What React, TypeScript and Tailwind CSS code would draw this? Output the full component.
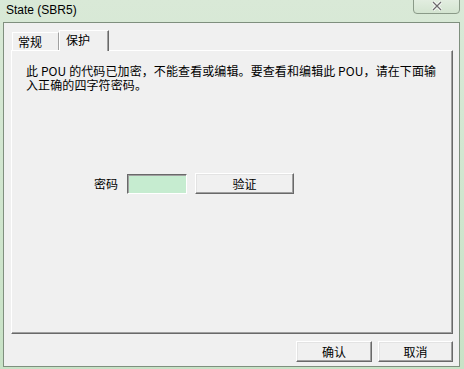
export default function App() {
  const sunkenBtn =
    'flex items-center justify-center bg-[#f0f0f0] border border-t-white border-l-white border-r-[#696969] border-b-[#696969] shadow-[inset_-1px_-1px_0_#a0a0a0,inset_1px_1px_0_#e3e3e3] text-[12px] text-black'

  return (
    <div className="w-[464px] h-[369px] flex flex-col bg-gradient-to-b from-[#d9e9d7] to-[#c8e2c6] font-['Noto_Sans_CJK_SC',sans-serif] overflow-hidden">
      {/* Title bar */}
      <div className="h-[22px] flex items-start relative shrink-0">
        <span className="pl-[6px] pt-[1px] text-[12px] leading-[18px] text-black font-['Liberation_Sans',sans-serif]">
          State (SBR5)
        </span>
        <div className="absolute right-[4px] top-[-2px] w-[47px] h-[16px] rounded-b-[4px] border border-[#8a9a88] bg-gradient-to-b from-[#e3eee1] to-[#d3e4d0] flex items-center justify-center">
          <svg width="12" height="10" viewBox="0 0 12 10">
            <path d="M2 1 L10 9 M10 1 L2 9" stroke="#fff" strokeWidth="3" />
            <path d="M2 1 L10 9 M10 1 L2 9" stroke="#6b6b6b" strokeWidth="1.3" />
          </svg>
        </div>
      </div>

      {/* Client area */}
      <div className="ml-[3px] mr-[4px] mb-[2px] flex-1 flex flex-col bg-[#f0f0f0] border border-[#7f8f7e]">
        {/* Tabs */}
        <div className="h-[27px] flex items-end pl-[8px] shrink-0">
          <div className="h-[18px] w-[47px] border-t border-l border-white border-r border-r-[#a0a0a0] pl-[5px] text-[12px] leading-[17px] text-black">
            常规
          </div>
          <div className="relative z-10 h-[21px] w-[50px] -mb-[1px] bg-[#f0f0f0] border-t border-l border-white border-r border-r-[#696969] shadow-[inset_-1px_0_0_#a0a0a0] pl-[6px] text-[12px] leading-[17px] text-black">
            保护
          </div>
        </div>

        {/* Tab panel */}
        <div className="ml-[7px] mr-[6px] h-[284px] flex flex-col border border-t-white border-l-white border-r-[#696969] border-b-[#696969] shadow-[inset_-1px_-1px_0_#a0a0a0]">
          <p className="mt-[13px] ml-[14px] text-[12px] leading-[14px] text-black tracking-[0.1px]">
            此 POU 的代码已加密，不能查看或编辑。要查看和编辑此 POU，请在下面输
            <br />
            入正确的四字符密码。
          </p>

          <div className="mt-[81px] ml-[82px] flex items-center">
            <span className="text-[12px] leading-[14px] text-black mr-[9px]">密码</span>
            <div className="w-[60px] h-[20px] bg-[#c6ecd0] border border-t-[#696969] border-l-[#696969] border-r-white border-b-white shadow-[inset_1px_1px_0_#a0a0a0]" />
            <div className={`${sunkenBtn} ml-[8px] w-[99px] h-[21px]`}>验证</div>
          </div>
        </div>

        {/* Bottom buttons */}
        <div className="mt-[7px] flex justify-end gap-[6px] pr-[6px]">
          <div className={`${sunkenBtn} w-[76px] h-[21px]`}>确认</div>
          <div className={`${sunkenBtn} w-[75px] h-[21px]`}>取消</div>
        </div>
      </div>
    </div>
  )
}
